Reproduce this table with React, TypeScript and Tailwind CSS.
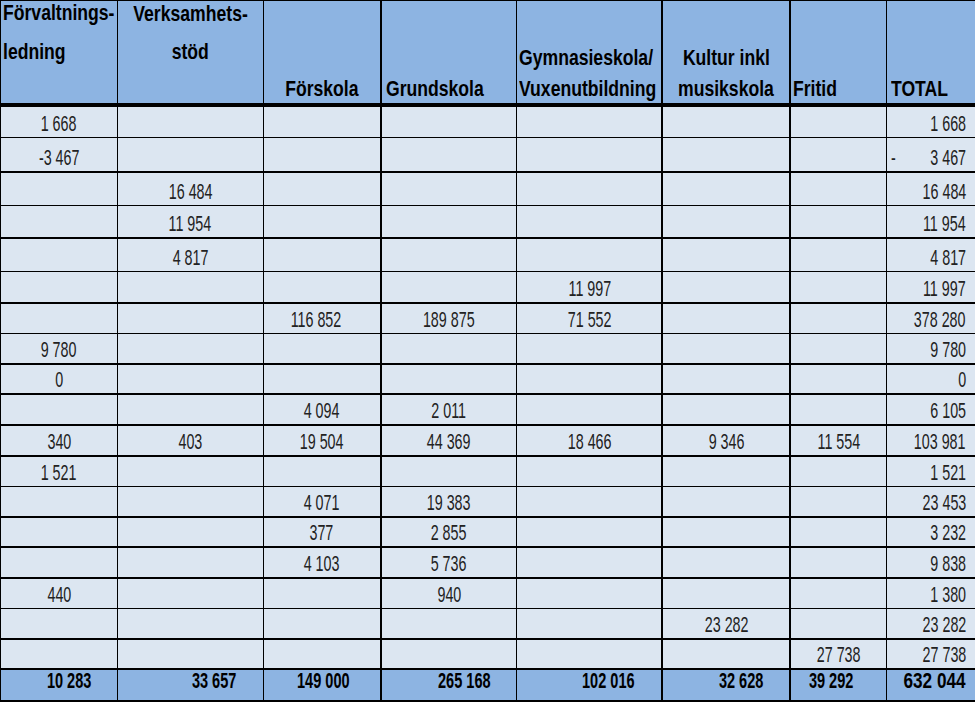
import React from "react";

type Row = { cells: (string | null)[]; h: number; thick: boolean };

const cols = ["w-[117px]", "w-[146px]", "w-[118px]", "w-[136px]", "w-[146px]", "w-[128px]", "w-[96px]", "w-[88px]"];
const colBorder = ["border-r", "border-r", "border-r-2", "border-r", "border-r-2", "border-r-2", "border-r", ""];

const rows: Row[] = [
    { cells: ["1 668", null, null, null, null, null, null, "1 668"], h: 31, thick: false },
    { cells: ["-3 467", null, null, null, null, null, null, "- 3 467"], h: 35, thick: true },
    { cells: [null, "16 484", null, null, null, null, null, "16 484"], h: 33, thick: false },
    { cells: [null, "11 954", null, null, null, null, null, "11 954"], h: 33, thick: true },
    { cells: [null, "4 817", null, null, null, null, null, "4 817"], h: 33, thick: false },
    { cells: [null, null, null, null, "11 997", null, null, "11 997"], h: 32, thick: true },
    { cells: [null, null, "116 852", "189 875", "71 552", null, null, "378 280"], h: 30, thick: false },
    { cells: ["9 780", null, null, null, null, null, null, "9 780"], h: 31, thick: true },
    { cells: ["0", null, null, null, null, null, null, "0"], h: 30, thick: true },
    { cells: [null, null, "4 094", "2 011", null, null, null, "6 105"], h: 31, thick: true },
    { cells: ["340", "403", "19 504", "44 369", "18 466", "9 346", "11 554", "103 981"], h: 31, thick: true },
    { cells: ["1 521", null, null, null, null, null, null, "1 521"], h: 30, thick: false },
    { cells: [null, null, "4 071", "19 383", null, null, null, "23 453"], h: 31, thick: true },
    { cells: [null, null, "377", "2 855", null, null, null, "3 232"], h: 30, thick: true },
    { cells: [null, null, "4 103", "5 736", null, null, null, "9 838"], h: 31, thick: true },
    { cells: ["440", null, null, "940", null, null, null, "1 380"], h: 30, thick: false },
    { cells: [null, null, null, null, null, "23 282", null, "23 282"], h: 31, thick: true },
    { cells: [null, null, null, null, null, null, "27 738", "27 738"], h: 30, thick: true },
];

const totals = ["10 283", "33 657", "149 000", "265 168", "102 016", "32 628", "39 292", "632 044"];
const totalPad = ["pr-[26px]", "pr-[26px]", "pr-[30px]", "pr-[26px]", "pr-[27px]", "pr-[26px]", "pr-[33px]", "pr-[9px]"];

// the sheet uses a narrow face; squeeze Liberation Sans to match
function H({ children, origin = "origin-left", className = "" }: { children: React.ReactNode; origin?: string; className?: string }) {
    return (
        <span className={`inline-block whitespace-nowrap scale-x-[0.8] leading-[22px] ${origin} ${className}`}>{children}</span>
    );
}

function Num({ v, last }: { v: string; last: boolean }) {
    if (v.startsWith("- ")) {
        return (
            <div className="flex w-full justify-between pl-[4px]">
                <span className="inline-block scale-x-[0.65] origin-left">-</span>
                <span className="inline-block scale-x-[0.65] origin-right">{v.slice(2)}</span>
            </div>
        );
    }
    return (
        <span className={`inline-block whitespace-nowrap scale-x-[0.65] ${last ? "origin-right" : "origin-center"}`}>{v}</span>
    );
}

export default function App() {
    return (
        <div className="w-[975px] h-[705px] bg-white font-['Liberation_Sans',Arial,sans-serif] text-black">
            {/* Header */}
            <div className="flex h-[107px] border-t border-l border-b-4 border-black bg-[#8db4e2] text-[22px] leading-[22px] font-bold">
                <div className={`${cols[0]} ${colBorder[0]} border-black flex flex-col items-start pl-[2px] pt-[1px]`}>
                    <H>Förvaltnings-</H>
                    <H className="mt-[17px]">ledning</H>
                </div>
                <div className={`${cols[1]} ${colBorder[1]} border-black flex flex-col items-center pt-[2px]`}>
                    <H origin="origin-center">Verksamhets-</H>
                    <H origin="origin-center" className="mt-[16px]">
                        stöd
                    </H>
                </div>
                <div className={`${cols[2]} ${colBorder[2]} border-black flex items-end justify-center pb-[3px]`}>
                    <H origin="origin-center">Förskola</H>
                </div>
                <div className={`${cols[3]} ${colBorder[3]} border-black flex items-end pl-[4px] pb-[3px]`}>
                    <H>Grundskola</H>
                </div>
                <div className={`${cols[4]} ${colBorder[4]} border-black flex flex-col justify-end items-start pl-[2px] pb-[3px]`}>
                    <H>Gymnasieskola/</H>
                    <H className="mt-[9px]">Vuxenutbildning</H>
                </div>
                <div className={`${cols[5]} ${colBorder[5]} border-black flex flex-col justify-end items-center pb-[3px]`}>
                    <H origin="origin-center">Kultur inkl</H>
                    <H origin="origin-center" className="mt-[9px]">
                        musikskola
                    </H>
                </div>
                <div className={`${cols[6]} ${colBorder[6]} border-black flex items-end pl-[2px] pb-[3px]`}>
                    <H>Fritid</H>
                </div>
                <div className={`${cols[7]} flex items-end pl-[4px] pb-[3px]`}>
                    <H>TOTAL</H>
                </div>
            </div>

            {/* Body rows */}
            {rows.map((r, i) => (
                <div
                    key={i}
                    style={{ height: r.h }}
                    className={`flex border-l border-black bg-[#dce6f1] text-[22px] leading-[22px] text-[#222] ${r.thick ? "border-b-2" : "border-b"}`}
                >
                    {r.cells.map((c, j) => (
                        <div
                            key={j}
                            className={`${cols[j]} ${colBorder[j]} border-black flex items-end pb-[2px] ${
                                j === 7 ? "justify-end pr-[9px]" : i === 6 && j === 2 ? "justify-center pr-[12px]" : "justify-center"
                            }`}
                        >
                            {c && <Num v={c} last={j === 7} />}
                        </div>
                    ))}
                </div>
            ))}

            {/* Totals */}
            <div className="flex h-[32px] border-l border-b-2 border-black bg-[#8db4e2] text-[22px] leading-[22px] font-bold">
                {totals.map((t, j) => (
                    <div key={j} className={`${cols[j]} ${colBorder[j]} border-black flex items-end justify-end pb-[8px] ${totalPad[j]}`}>
                        <span className={`inline-block whitespace-nowrap origin-right ${j === 7 ? "scale-x-[0.78]" : "scale-x-[0.66]"}`}>{t}</span>
                    </div>
                ))}
            </div>
        </div>
    );
}
